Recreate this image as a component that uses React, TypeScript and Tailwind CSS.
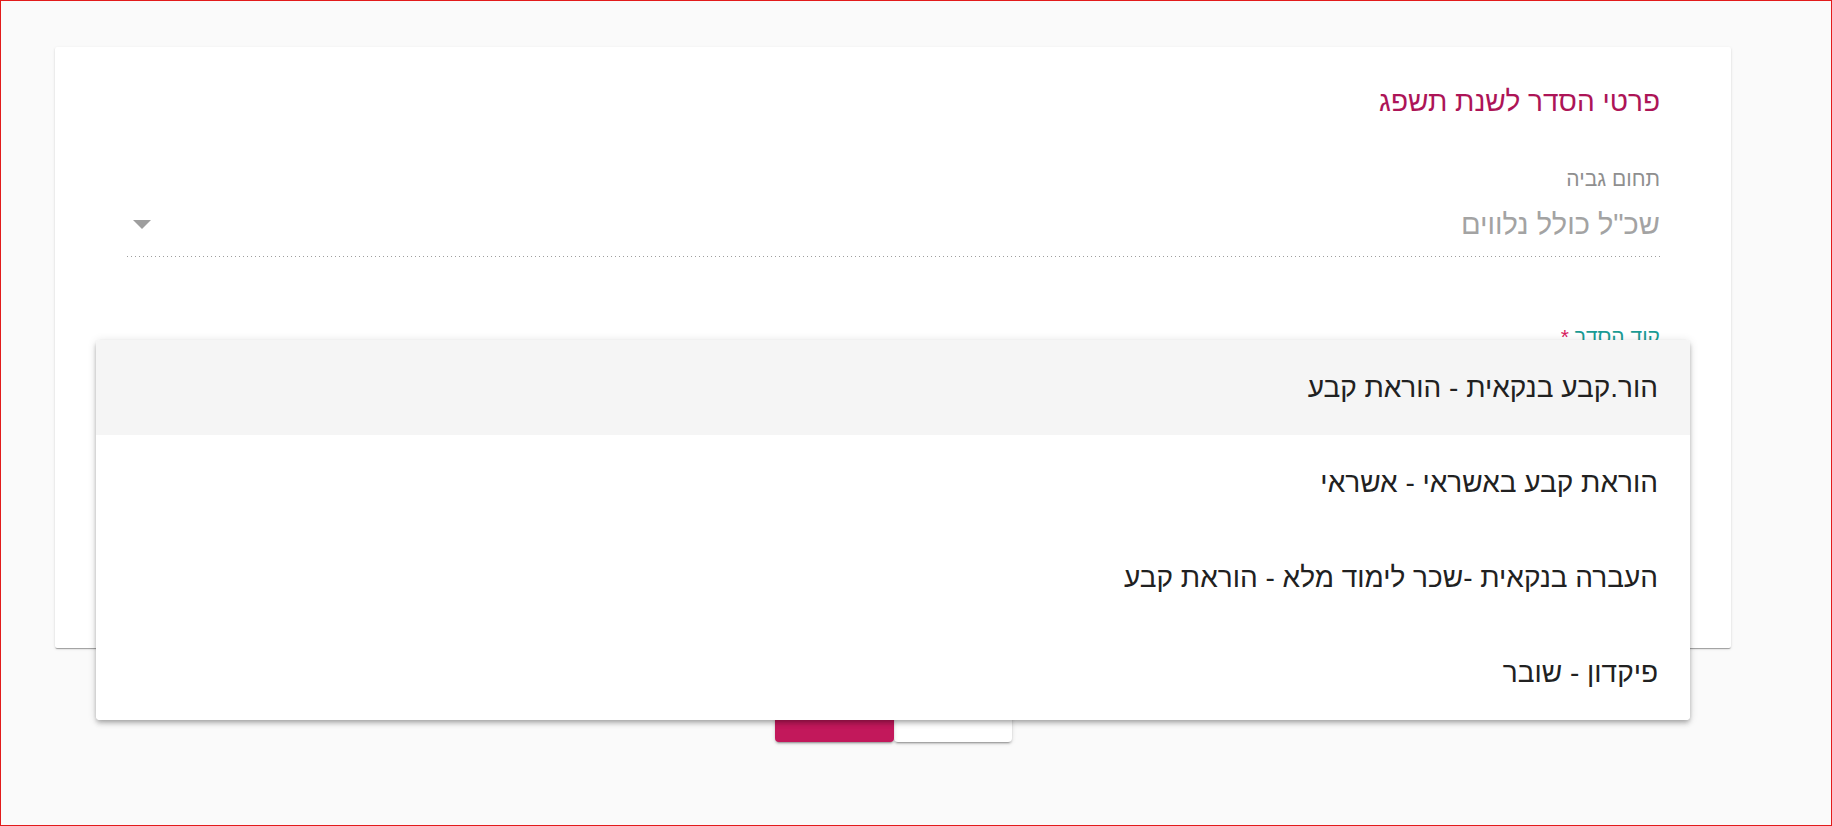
import React from 'react';

const options = [
  'הור.קבע בנקאית - הוראת קבע',
  'הוראת קבע באשראי - אשראי',
  'העברה בנקאית -שכר לימוד מלא - הוראת קבע',
  'פיקדון - שובר',
];

const dotted =
  'bg-[linear-gradient(to_right,#9e9e9e_0,#9e9e9e_33%,transparent_0)] bg-[length:4px_1px] bg-repeat-x bg-bottom';

export default function App() {
  return (
    <div
      dir="rtl"
      className="relative w-[1832px] h-[826px] overflow-hidden bg-[#fafafa] border border-[#e21b1b] pt-[46px] pl-[54px] pr-[100px] font-['Liberation_Sans','DejaVu_Sans',sans-serif]"
    >
      {/* card */}
      <div className="bg-white rounded-[2px] h-[601px] px-[71px] pt-[40px] shadow-[0_2px_1px_-1px_rgba(0,0,0,0.2),0_1px_1px_0_rgba(0,0,0,0.14),0_1px_3px_0_rgba(0,0,0,0.12)]">
        <h2 className="text-[28px] leading-[30px] text-[#ad1457] font-normal">פרטי הסדר לשנת תשפג</h2>

        <div className="mt-[50px]">
          <div className="text-[21px] leading-[24px] text-[#8f8f8f]">תחום גביה</div>
          <div className={`flex items-center justify-between mt-[16px] pb-[16px] ${dotted}`}>
            <span className="text-[29px] leading-[34px] text-[#a3a3a3]">שכ"ל כולל נלווים</span>
            <svg width="18" height="9" viewBox="0 0 18 9" className="ml-[7px]">
              <path d="M0 0 L18 0 L9 9 Z" fill="#9e9e9e" />
            </svg>
          </div>
        </div>

        <div className="mt-[68px]">
          <div className="text-[21px] leading-[24px] text-[#1a9b94]">
            קוד הסדר <span className="text-[#d81b60]">*</span>
          </div>
          <div className="mt-[16px] h-[34px] border-b border-[#8a8a8a]" />
        </div>
      </div>

      {/* actions */}
      <div className="flex justify-center mt-[42px]">
        <button className="w-[118px] h-[52px] pb-[10px] bg-white text-[#333] text-[20px] rounded-[4px] shadow-[0_3px_1px_-2px_rgba(0,0,0,0.2),0_2px_2px_0_rgba(0,0,0,0.14),0_1px_5px_0_rgba(0,0,0,0.12)]">
          ביטול
        </button>
        <button className="w-[119px] h-[52px] pb-[10px] bg-[#c2185b] text-white text-[20px] rounded-[4px] shadow-[0_3px_1px_-2px_rgba(0,0,0,0.2),0_2px_2px_0_rgba(0,0,0,0.14),0_1px_5px_0_rgba(0,0,0,0.12)]">
          שמור
        </button>
      </div>

      {/* open select panel */}
      <div className="absolute left-[95px] top-[339px] w-[1594px] bg-white rounded-[4px] overflow-hidden shadow-[0_2px_4px_-1px_rgba(0,0,0,0.2),0_4px_5px_0_rgba(0,0,0,0.14),0_1px_10px_0_rgba(0,0,0,0.12)]">
        {options.map((o, i) => (
          <div
            key={o}
            className={`h-[95px] flex items-center px-[32px] text-[28px] text-[#212121] ${i === 0 ? 'bg-[#f5f5f5]' : 'bg-white'}`}
          >
            {o}
          </div>
        ))}
      </div>
    </div>
  );
}
